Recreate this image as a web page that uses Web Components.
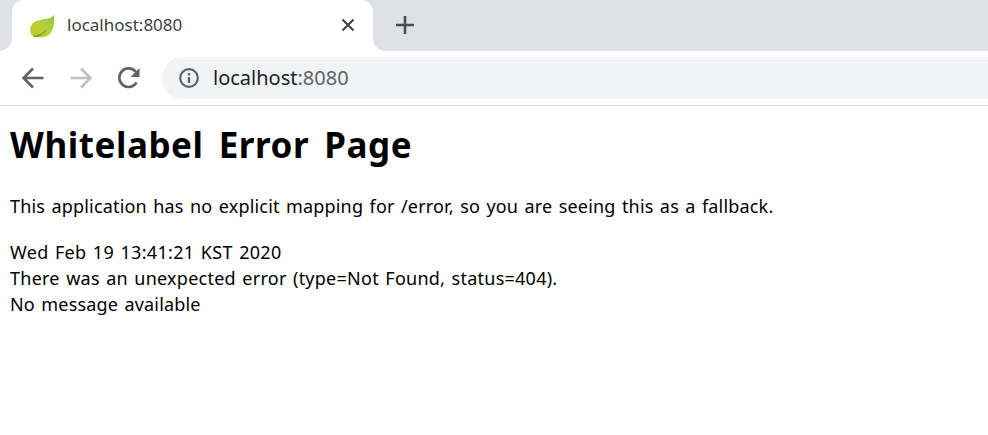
<!doctype html>
<html><head><meta charset="utf-8"><style>
html,body{margin:0;padding:0;background:#fff;height:100%}
body{width:988px;height:435px;overflow:hidden}
</style></head><body>
<browser-window>
<browser-tabstrip slot="chrome"></browser-tabstrip>
<browser-toolbar slot="chrome"></browser-toolbar>
<error-page></error-page>
</browser-window>
<script>
const F='"Noto Sans","Noto Sans CJK KR",sans-serif';
class W extends HTMLElement{constructor(){super();this.attachShadow({mode:'open'}).innerHTML=`<style>:host{display:flex;flex-direction:column;width:988px;height:435px;overflow:hidden}</style><slot name="chrome"></slot><slot></slot>`}}
class T extends HTMLElement{constructor(){super();this.attachShadow({mode:'open'}).innerHTML=`<style>
:host{display:flex;height:51px;background:#dee1e6;padding-left:12px;box-sizing:border-box;font-family:${F}}
.tab{width:361px;height:51px;background:#fff;border-radius:12px 12px 0 0;position:relative;display:flex;align-items:center;box-sizing:border-box;padding-left:17px}
.tab::before,.tab::after{content:"";position:absolute;bottom:0;width:12px;height:12px}
.tab::before{left:-12px;background:radial-gradient(circle at 0 0,#dee1e6 11.5px,#fff 12px)}
.tab::after{right:-12px;background:radial-gradient(circle at 100% 0,#dee1e6 11.5px,#fff 12px)}
.title{margin-left:12px;font-size:17px;color:#3c4043;line-height:49px;height:49px;margin-bottom:2px;flex:1}
.x{margin-right:18px;margin-bottom:1px;display:block}
.plus{margin-left:23px;margin-bottom:1px;align-self:center}
</style><div class="tab">
<svg width="26" height="26" viewBox="0 0 26 26"><defs><linearGradient id="g" x1="0" y1="1" x2="1" y2="0"><stop offset="0" stop-color="#c9c91c"/><stop offset=".55" stop-color="#b4cf3a"/><stop offset="1" stop-color="#8fc044"/></linearGradient></defs><path d="M25 1.500c-1 2.200-3 3.400-6 4C13.500 6.600 5 6.500 2 13c-1.400 3.700-.6 7.700 1.500 9.900 1 1 2.200 1.400 3.500 1.200 5 .6 11.500.3 14.800-4.400 3-4 4-11.700 3.200-18.200z" fill="url(#g)"/><path d="M4 23c4.500-.5 10-2.500 14-6.700-3.400 5-7.700 7.500-13 7.800z" fill="#5f9e2f"/></svg>
<span class="title">localhost:8080</span>
<svg class="x" width="14" height="14" viewBox="0 0 14 14"><path d="M1.500 1.500l11 11M12.500 1.500l-11 11" stroke="#3c4043" stroke-width="2.100" fill="none"/></svg>
</div>
<svg class="plus" width="18" height="18" viewBox="0 0 18 18"><path d="M9 0v18M0 9h18" stroke="#4a4d51" stroke-width="2.600" fill="none"/></svg>`}}
class B extends HTMLElement{constructor(){super();this.attachShadow({mode:'open'}).innerHTML=`<style>
:host{display:flex;align-items:center;height:55px;background:#fff;border-bottom:1px solid #d9dadc;box-sizing:border-box;font-family:${F};padding-left:21px}
svg{display:block;flex:none}
.f{margin-left:24px}.r{margin-left:24px}
.omni{margin-left:21px;flex:1;height:42px;border-radius:21px 0 0 21px;background:#f1f3f4;display:flex;align-items:center;padding-left:17px;font-size:20px;color:#202124}
.omni span{margin-left:14px;line-height:42px;height:42px}.omni i{font-style:normal;color:#5f6368}
</style>
<svg width="24" height="24" viewBox="0 0 24 24"><path d="M22.500 12H3M12 2.500L2.500 12l9.500 9.500" stroke="#5f6368" stroke-width="2.600" fill="none"/></svg>
<svg class="f" width="24" height="24" viewBox="0 0 24 24"><path d="M1.500 12H21M12 2.500l9.500 9.500-9.500 9.500" stroke="#bdc1c6" stroke-width="2.600" fill="none"/></svg>
<svg class="r" width="24" height="24" viewBox="0 0 24 24"><path d="M19.600 16.500A9.300 9.300 0 1 1 18.800 5.800" stroke="#5f6368" stroke-width="2.600" fill="none"/><path d="M22.500 2v9h-9z" fill="#5f6368"/></svg>
<div class="omni"><svg width="20" height="20" viewBox="0 0 20 20"><circle cx="10" cy="10" r="8.800" stroke="#5f6368" stroke-width="2.200" fill="none"/><path d="M10 9v6" stroke="#5f6368" stroke-width="2.400"/><path d="M10 5v2.400" stroke="#5f6368" stroke-width="2.400"/></svg><span>localhost<i>:8080</i></span></div>`}}
class E extends HTMLElement{constructor(){super();this.attachShadow({mode:'open'}).innerHTML=`<style>
:host{display:block;padding:0 0 0 10px;font-family:${F};font-size:18px;color:#000;line-height:26px;letter-spacing:.185px;word-spacing:1.47px}
h1{margin:0;padding-top:15px;height:47px;line-height:47px;font-size:35px;font-weight:700;letter-spacing:.55px;word-spacing:5.5px}
p{margin:0}
.a{margin-top:25px}
.b{margin-top:20px;letter-spacing:.3px}
.c{letter-spacing:.25px}
</style><h1>Whitelabel Error Page</h1><p class="a">This application has no explicit mapping for /error, so you are seeing this as a fallback.</p><div class="b">Wed Feb 19 13:41:21 KST 2020</div><div class="c">There was an unexpected error (type=Not Found, status=404).</div><div>No message available</div>`}}
customElements.define('browser-window',W);customElements.define('browser-tabstrip',T);customElements.define('browser-toolbar',B);customElements.define('error-page',E);
</script></body></html>
